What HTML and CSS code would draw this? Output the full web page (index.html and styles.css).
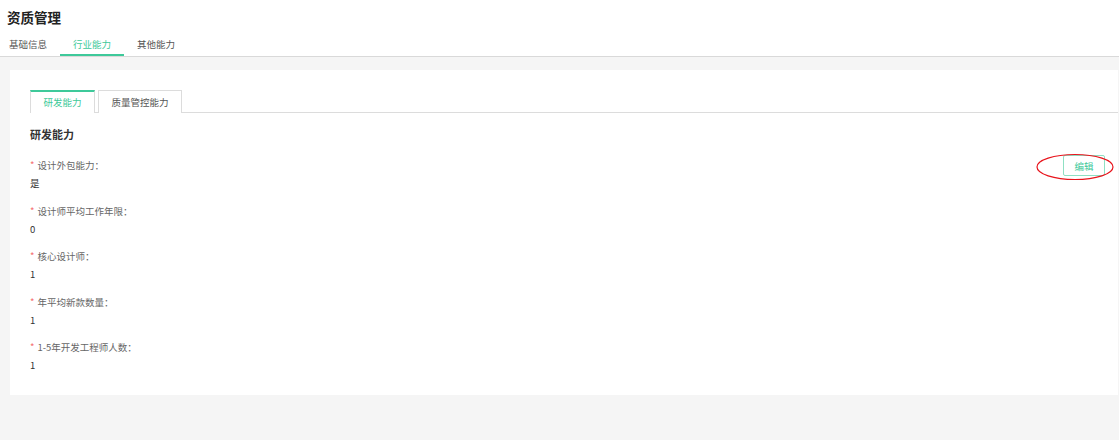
FILE: index.html
```html
<!DOCTYPE html>
<html lang="zh-CN">
  <head>
    <meta charset="utf-8" />
    <title>资质管理</title>
    <link rel="stylesheet" href="styles.css">
  </head>
  <body>
    <div class="header">
      <h1>资质管理</h1>
      <div class="nav">
        <span class="nav-item">基础信息</span>
        <span class="nav-item active">行业能力</span>
        <span class="nav-item">其他能力</span>
      </div>
    </div>
    <div class="main">
      <div class="card">
        <div class="card-tabs">
          <span class="card-tab active">研发能力</span>
          <span class="card-tab">质量管控能力</span>
        </div>
        <h2>研发能力</h2>
        <div class="panel">
          <div class="fields">
            <div class="field">
              <div class="label"><i>*</i>设计外包能力：</div>
              <div class="value">是</div>
            </div>
            <div class="field">
              <div class="label"><i>*</i>设计师平均工作年限：</div>
              <div class="value">0</div>
            </div>
            <div class="field">
              <div class="label"><i>*</i>核心设计师：</div>
              <div class="value">1</div>
            </div>
            <div class="field">
              <div class="label"><i>*</i>年平均新款数量：</div>
              <div class="value">1</div>
            </div>
            <div class="field">
              <div class="label"><i>*</i>1-5年开发工程师人数：</div>
              <div class="value">1</div>
            </div>
          </div>
          <div class="actions">
            <button class="btn-edit">编辑</button>
            <svg class="mark" width="78" height="28" viewBox="0 0 78 28">
              <ellipse cx="39" cy="14" rx="38" ry="12.5" fill="none" stroke="#e8141c" stroke-width="1.2" />
            </svg>
          </div>
        </div>
      </div>
    </div>
  </body>
</html>
```

FILE: styles.css
```css
html {
  font-family: "Noto Sans CJK SC", "Liberation Sans", sans-serif;
  font-size: 9.5px;
  color: #333;
}

body {
  margin: 0;
  background-color: #f5f5f5;
  height: 440px;
}

.header {
  background-color: white;
  border-bottom: 1px solid #d9d9d9;
}

.header h1 {
  margin: 0;
  padding-left: 7px;
  font-size: 13.5px;
  line-height: 34px;
  font-weight: bold;
  color: #222;
}

.nav {
  display: flex;
}

.nav-item {
  padding: 0 13px;
  line-height: 20px;
  border-bottom: 2px solid transparent;
  color: #555;
  white-space: nowrap;
}

.nav-item:first-child {
  padding-left: 9px;
}

.nav-item.active {
  color: #3ec99a;
  border-bottom-color: #3ec99a;
}

.main {
  padding: 13px 1px 0 10px;
}

.card {
  background-color: white;
  padding: 20px 0 24px 20px;
  height: 281px;
}

.card-tabs {
  display: flex;
  gap: 3px;
  border-bottom: 1px solid #dcdcdc;
  height: 22px;
}

.card-tab {
  box-sizing: border-box;
  height: 23px;
  width: 84px;
  line-height: 22px;
  text-align: center;
  white-space: nowrap;
  border: 1px solid #dcdcdc;
  border-bottom: none;
  color: #555;
  background-color: white;
}

.card-tab.active {
  width: 65px;
  color: #3ec99a;
  border-top: 2px solid #3ec99a;
  line-height: 21px;
}

h2 {
  margin: 11px 0 0;
  font-size: 11px;
  line-height: 20px;
  font-weight: bold;
  color: #333;
}

.panel {
  display: flex;
  padding-top: 12px;
  padding-right: 13px;
}

.fields {
  flex: 1;
}

.field {
  margin-bottom: 9.5px;
}

.label {
  line-height: 18px;
  color: #666;
}

.label i {
  font-style: normal;
  color: #f56c6c;
  margin-right: 3px;
}

.value {
  line-height: 18px;
  color: #333;
}

.actions {
  position: relative;
}

.btn-edit {
  display: block;
  margin-top: -1px;
  width: 42px;
  height: 21px;
  padding: 0;
  font-family: inherit;
  font-size: 9.5px;
  color: #3ec99a;
  background-color: white;
  border: 1px solid #8fe0c3;
  border-radius: 2px;
}

.mark {
  position: absolute;
  left: -27px;
  top: -3px;
}
```
